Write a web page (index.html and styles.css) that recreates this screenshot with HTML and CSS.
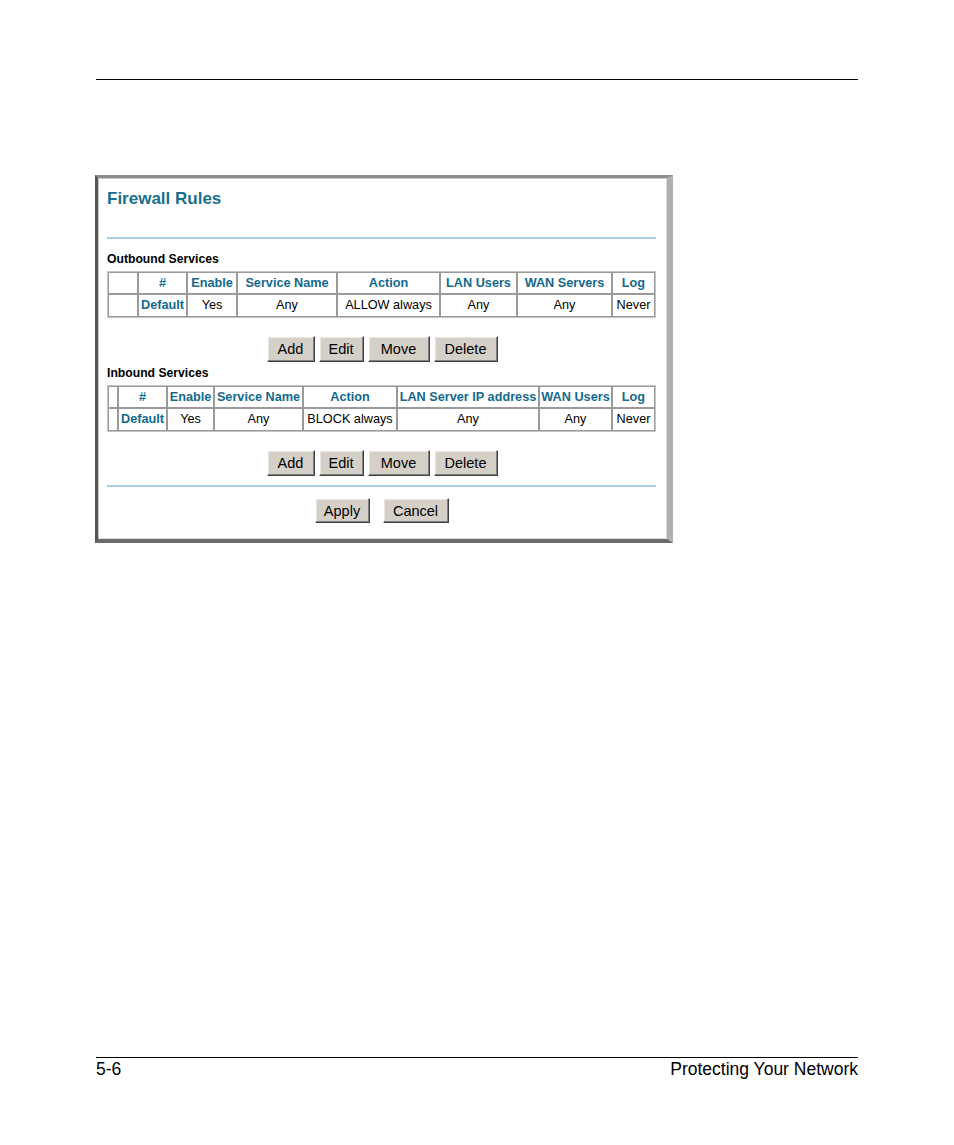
FILE: index.html
```html
<!DOCTYPE html>
<html>
<head>
<meta charset="utf-8">
<link rel="stylesheet" href="styles.css">
</head>
<body>
<div class="page">
  <div class="top-rule"></div>
  <div class="frame">
    <div class="title">Firewall Rules</div>
    <div class="blue-rule rule-top"></div>

    <div class="section-label label-out">Outbound Services</div>
    <table class="grid">
      <colgroup>
        <col style="width:30px"><col style="width:49px"><col style="width:50px"><col style="width:100px">
        <col style="width:103px"><col style="width:77px"><col style="width:95px"><col style="width:43px">
      </colgroup>
      <tr class="head">
        <td></td><td>#</td><td>Enable</td><td>Service Name</td><td>Action</td><td>LAN Users</td><td>WAN Servers</td><td>Log</td>
      </tr>
      <tr class="body-row">
        <td></td><td class="link">Default</td><td>Yes</td><td>Any</td><td>ALLOW always</td><td>Any</td><td>Any</td><td>Never</td>
      </tr>
    </table>
    <div class="btn-row">
      <button class="btn w-add">Add</button>
      <button class="btn w-edit">Edit</button>
      <button class="btn w-move">Move</button>
      <button class="btn w-del">Delete</button>
    </div>

    <div class="section-label label-in">Inbound Services</div>
    <table class="grid">
      <colgroup>
        <col style="width:10px"><col style="width:49px"><col style="width:47px"><col style="width:89px">
        <col style="width:94px"><col style="width:142px"><col style="width:73px"><col style="width:43px">
      </colgroup>
      <tr class="head">
        <td></td><td>#</td><td>Enable</td><td>Service Name</td><td>Action</td><td>LAN Server IP address</td><td>WAN Users</td><td>Log</td>
      </tr>
      <tr class="body-row">
        <td></td><td class="link">Default</td><td>Yes</td><td>Any</td><td>BLOCK always</td><td>Any</td><td>Any</td><td>Never</td>
      </tr>
    </table>
    <div class="btn-row">
      <button class="btn w-add">Add</button>
      <button class="btn w-edit">Edit</button>
      <button class="btn w-move">Move</button>
      <button class="btn w-del">Delete</button>
    </div>

    <div class="blue-rule rule-bottom"></div>
    <div class="btn-row final-row">
      <button class="btn w-apply">Apply</button>
      <button class="btn w-cancel">Cancel</button>
    </div>
  </div>

  <div class="footer">
    <span>5-6</span>
    <span>Protecting Your Network</span>
  </div>
</div>
</body>
</html>
```

FILE: styles.css
```css
html, body {
  margin: 0;
  padding: 0;
  background: #fff;
}

.page {
  box-sizing: border-box;
  height: 1145px;
  width: 954px;
  padding: 0 96px 65px 96px;
  display: flex;
  flex-direction: column;
  font-family: "Liberation Sans", Arial, sans-serif;
  color: #000;
}

.top-rule {
  margin-top: 79px;
  height: 0;
  border-top: 1px solid #000;
}

.frame {
  box-sizing: border-box;
  margin-top: 95px;
  margin-left: -1px;
  width: 578px;
  height: 368px;
  border-left: 3px solid #555;
  border-top: 3px solid #8c8c8c;
  border-right: 6px solid #b0b0b0;
  border-bottom: 4px solid #6a6a6a;
  box-shadow: inset 1px 1px 0 #c8c8c8, inset -1px -1px 0 #dcdcdc;
  padding: 11px 0 0 9px;
  background: #fff;
}

.title {
  font-size: 17px;
  font-weight: bold;
  line-height: 20px;
  color: #17708f;
}

.blue-rule {
  width: 549px;
  height: 2px;
  background: #a9cde2;
}

.rule-top { margin-top: 28px; }
.rule-bottom { margin-top: 9px; }

.section-label {
  font-size: 12.2px;
  font-weight: bold;
  line-height: 14px;
}

.label-out { margin-top: 13px; }
.label-in { margin-top: 4px; }

.grid {
  margin-top: 5px;
  width: 549px;
  table-layout: fixed;
  border-collapse: separate;
  border-spacing: 0;
  border: 1px solid #c4c4c4;
}

.grid td {
  border: 1px solid #9a9a9a;
  padding: 0;
  text-align: center;
  font-size: 12.7px;
  white-space: nowrap;
  overflow: hidden;
}

.grid .head td {
  height: 20px;
  line-height: 20px;
  font-weight: bold;
  color: #13698f;
}

.grid .body-row td {
  height: 21px;
  line-height: 21px;
}

.grid td.link {
  font-weight: bold;
  color: #13698f;
}

.btn-row {
  width: 549px;
  margin-top: 18px;
  display: flex;
  justify-content: center;
  gap: 4px;
}

.final-row {
  margin-top: 11px;
  gap: 13px;
}

.btn {
  box-sizing: border-box;
  height: 26px;
  padding: 0;
  margin: 0;
  background: #d4d0c8;
  border-top: 1px solid #fff;
  border-left: 1px solid #fff;
  border-right: 1px solid #404040;
  border-bottom: 1px solid #404040;
  box-shadow: inset -1px -1px 0 #808080, inset 1px 1px 0 #e8e6e0;
  font-family: "Liberation Sans", Arial, sans-serif;
  font-size: 14.5px;
  color: #000;
  line-height: 22px;
}

.final-row .btn { height: 25px; }

.w-add { width: 48px; margin-left: 1px; }
.w-edit { width: 45px; }
.w-move { width: 62px; }
.w-del { width: 64px; }
.w-apply { width: 55px; }
.w-cancel { width: 66px; }

.footer {
  margin-top: auto;
  border-top: 1px solid #000;
  display: flex;
  justify-content: space-between;
  font-size: 17.5px;
  line-height: 22px;
  height: 22px;
}
```
